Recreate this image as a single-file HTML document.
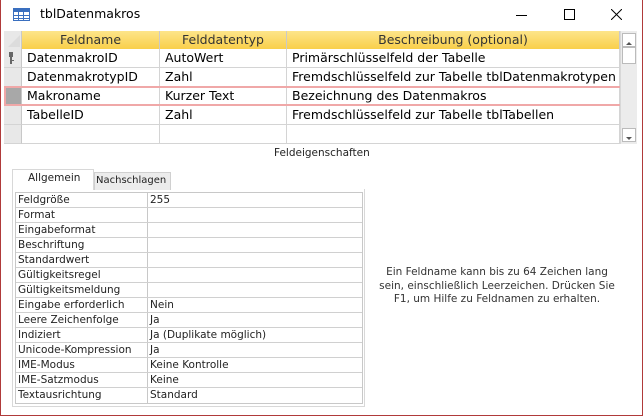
<!DOCTYPE html>
<html><head><meta charset="utf-8"><style>
*{margin:0;padding:0;box-sizing:border-box}
body{width:643px;height:416px;background:#fff;position:relative;overflow:hidden;font-family:"Segoe UI","DejaVu Sans","Liberation Sans",sans-serif;color:#000}
.win{position:absolute;left:0;top:0;width:643px;height:416px;border:1px solid #b03a3a;border-top:none}
.abs{position:absolute}
.t{position:absolute;white-space:nowrap}
.grid{position:absolute;left:4px;top:31px;width:633px;height:113px;background:#fff}
.hdr{position:absolute;top:0;height:18px;background:linear-gradient(#fde58a,#f9cf4a);border-right:1px solid #c9c9c9;font-size:12.5px;color:#333;text-align:center;line-height:18px}
.cell{position:absolute;height:19px;border-right:1px solid #d4d4d4;border-bottom:1px solid #d4d4d4;font-size:12.5px;line-height:18px;padding-left:5px;white-space:nowrap}
.sel{position:absolute;left:0;width:18px;height:19px;background:#e8e8e8;border-bottom:1px solid #d4d4d4;border-right:1px solid #c8c8c8}
.p{font-size:10.5px;color:#222}
.pr{position:absolute;left:16px;width:346px;height:15px;border-bottom:1px solid #d0d0d0;font-size:10.5px;line-height:14px;color:#222}
.pr span{position:absolute;top:0}
</style></head><body>
<div class="win"></div>
<svg class="abs" style="left:13px;top:8px" width="17" height="13" viewBox="0 0 17 13"><rect x="0.5" y="0.5" width="16" height="12" fill="#fff" stroke="#3a6fbf"/><rect x="1" y="1" width="15" height="3" fill="#3a6fbf"/><path d="M1 7.5H16M1 10.5H16M5.5 4V12M10.5 4V12" stroke="#3a6fbf"/></svg>
<div class="t" style="left:40px;top:6px;font-size:12.5px">tblDatenmakros</div>
<div class="abs" style="left:516px;top:15px;width:11px;height:1px;background:#000"></div>
<div class="abs" style="left:564px;top:9px;width:11px;height:11px;border:1px solid #000"></div>
<svg class="abs" style="left:611px;top:9px" width="11" height="11"><path d="M0 0L11 11M11 0L0 11" stroke="#000" stroke-width="1"/></svg>

<div class="grid">
 <div class="abs" style="left:0;top:0;width:18px;height:18px;background:#e8e8e8;border-right:1px solid #c9c9c9"><svg width="18" height="18"><path d="M4 16L16 4V16Z" fill="#dcdcdc"/></svg></div>
 <div class="hdr" style="left:18px;width:138px">Feldname</div>
 <div class="hdr" style="left:156px;width:127px">Felddatentyp</div>
 <div class="hdr" style="left:283px;width:333px">Beschreibung (optional)</div>
 <div class="sel" style="top:18px"><svg width="18" height="19"><rect x="5" y="3" width="4" height="5" fill="#666"/><rect x="6" y="8" width="2" height="7" fill="#666"/><rect x="8" y="11" width="2" height="1" fill="#666"/></svg></div>
 <div class="sel" style="top:37px"></div>
 <div class="sel" style="top:56px;background:#a8a8a8"></div>
 <div class="sel" style="top:75px"></div>
 <div class="sel" style="top:94px"></div>
 <div class="cell" style="left:18px;top:18px;width:138px">DatenmakroID</div>
 <div class="cell" style="left:156px;top:18px;width:127px">AutoWert</div>
 <div class="cell" style="left:283px;top:18px;width:333px">Primärschlüsselfeld der Tabelle</div>
 <div class="cell" style="left:18px;top:37px;width:138px">DatenmakrotypID</div>
 <div class="cell" style="left:156px;top:37px;width:127px">Zahl</div>
 <div class="cell" style="left:283px;top:37px;width:333px">Fremdschlüsselfeld zur Tabelle tblDatenmakrotypen</div>
 <div class="cell" style="left:18px;top:56px;width:138px">Makroname</div>
 <div class="cell" style="left:156px;top:56px;width:127px">Kurzer Text</div>
 <div class="cell" style="left:283px;top:56px;width:333px">Bezeichnung des Datenmakros</div>
 <div class="cell" style="left:18px;top:75px;width:138px">TabelleID</div>
 <div class="cell" style="left:156px;top:75px;width:127px">Zahl</div>
 <div class="cell" style="left:283px;top:75px;width:333px">Fremdschlüsselfeld zur Tabelle tblTabellen</div>
 <div class="cell" style="left:18px;top:94px;width:138px"></div>
 <div class="cell" style="left:156px;top:94px;width:127px"></div>
 <div class="cell" style="left:283px;top:94px;width:333px"></div>
 <div class="abs" style="left:0;top:55px;width:618px;height:20px;border:2px solid #f0a8a8"></div>
 <div class="abs" style="left:616px;top:0;width:17px;height:113px;background:#ececec;border-left:1px solid #d8d8d8"></div>
 <div class="abs" style="left:618px;top:2px;width:14px;height:14px;background:#fff;border:1px solid #bbb"><svg width="12" height="12"><path d="M3 8L6 5L9 8Z" fill="#555"/></svg></div>
 <div class="abs" style="left:618px;top:16px;width:14px;height:17px;background:#fff;border:1px solid #bbb"></div>
 <div class="abs" style="left:618px;top:97px;width:14px;height:14px;background:#fff;border:1px solid #bbb"><svg width="12" height="12"><path d="M3 5L6 8L9 5Z" fill="#555"/></svg></div>
</div>

<div class="t p" style="left:274px;top:147px">Feldeigenschaften</div>
<div class="abs" style="left:12px;top:169px;width:82px;height:21px;background:#fff;border:1px solid #d8d8d8;border-bottom:none"></div>
<div class="t p" style="left:28px;top:172px">Allgemein</div>
<div class="abs" style="left:94px;top:172px;width:77px;height:18px;background:#ececec;border:1px solid #d0d0d0;border-bottom:none"></div>
<div class="t" style="left:96px;top:175px;font-size:10px;color:#222">Nachschlagen</div>
<div class="abs" style="left:12px;top:189px;width:353px;height:218px;border:1px solid #d8d8d8;border-top:none"></div>
<div class="abs" style="left:15px;top:192px;width:348px;height:212px;border:1px solid #c8c8c8"></div>
<div class="abs" style="left:147px;top:192px;width:1px;height:212px;background:#c8c8c8"></div>
<div class="pr" style="top:193px"><span style="left:2px">Feldgröße</span><span style="left:134px">255</span></div>
<div class="pr" style="top:208px"><span style="left:2px">Format</span></div>
<div class="pr" style="top:223px"><span style="left:2px">Eingabeformat</span></div>
<div class="pr" style="top:238px"><span style="left:2px">Beschriftung</span></div>
<div class="pr" style="top:253px"><span style="left:2px">Standardwert</span></div>
<div class="pr" style="top:268px"><span style="left:2px">Gültigkeitsregel</span></div>
<div class="pr" style="top:283px"><span style="left:2px">Gültigkeitsmeldung</span></div>
<div class="pr" style="top:298px"><span style="left:2px">Eingabe erforderlich</span><span style="left:134px">Nein</span></div>
<div class="pr" style="top:313px"><span style="left:2px">Leere Zeichenfolge</span><span style="left:134px">Ja</span></div>
<div class="pr" style="top:328px"><span style="left:2px">Indiziert</span><span style="left:134px">Ja (Duplikate möglich)</span></div>
<div class="pr" style="top:343px"><span style="left:2px">Unicode-Kompression</span><span style="left:134px">Ja</span></div>
<div class="pr" style="top:358px"><span style="left:2px">IME-Modus</span><span style="left:134px">Keine Kontrolle</span></div>
<div class="pr" style="top:373px"><span style="left:2px">IME-Satzmodus</span><span style="left:134px">Keine</span></div>
<div class="pr" style="top:388px;border-bottom:none"><span style="left:2px">Textausrichtung</span><span style="left:134px">Standard</span></div>

<div class="abs p" style="left:372px;top:266px;width:250px;text-align:center;line-height:13.5px;color:#333">Ein Feldname kann bis zu 64 Zeichen lang<br>sein, einschließlich Leerzeichen. Drücken Sie<br>F1, um Hilfe zu Feldnamen zu erhalten.</div>
</body></html>
